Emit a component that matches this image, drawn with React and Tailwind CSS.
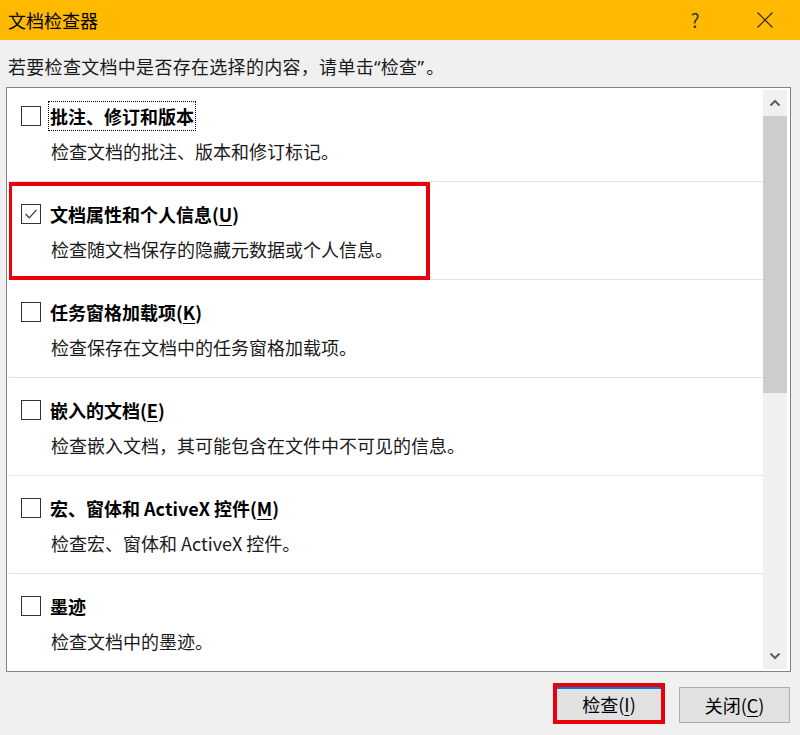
import React from 'react';

const items = [
    { title: '批注、修订和版本', desc: '检查文档的批注、版本和修订标记。', focused: true },
    { title: '文档属性和个人信息', key: 'U', desc: '检查随文档保存的隐藏元数据或个人信息。', checked: true, marked: true },
    { title: '任务窗格加载项', key: 'K', desc: '检查保存在文档中的任务窗格加载项。' },
    { title: '嵌入的文档', key: 'E', desc: '检查嵌入文档，其可能包含在文件中不可见的信息。' },
    { title: '宏、窗体和 ActiveX 控件', key: 'M', desc: '检查宏、窗体和 ActiveX 控件。' },
    { title: '墨迹', desc: '检查文档中的墨迹。' },
];

function Checkbox({ checked }) {
    return (
        <div className="w-[20px] h-[20px] shrink-0 border border-[#333] bg-white flex items-center justify-center">
            {checked && (
                <svg width="16" height="16" viewBox="0 0 16 16" fill="none">
                    <path d="M2.5 8 L6.3 11.8 L13.5 3.8" stroke="#333" strokeWidth="1.2" />
                </svg>
            )}
        </div>
    );
}

function Item({ item, first }) {
    return (
        <div className={`relative border-b border-[#e3e3e3] pb-[18px] ${first ? 'pt-[16px]' : 'pt-[20px]'}`}>
            <div className="flex items-center h-[24px] pl-[12px] gap-[7px]">
                <Checkbox checked={item.checked} />
                <span
                    className={`px-[1px] h-[30px] leading-[28px] font-bold text-[18px] text-black border border-dotted ${item.focused ? 'border-black' : 'border-transparent'}`}
                >
                    {item.title}
                    {item.key && (
                        <>
                            (<span className="underline underline-offset-[3px] decoration-1">{item.key}</span>)
                        </>
                    )}
                </span>
            </div>
            <div className="mt-[11px] pl-[42px] h-[24px] leading-[24px] text-[18px] text-[#1a1a1a]">
                {item.desc}
            </div>
            {item.marked && (
                <div className="absolute left-[-1px] top-0 w-[422px] h-[98px] border-4 border-[#e8000b]" />
            )}
        </div>
    );
}

function Chevron({ up }) {
    return (
        <svg width="12" height="8" viewBox="0 0 12 8" fill="none">
            <path d={up ? 'M1.5 6.5 L6 2 L10.5 6.5' : 'M1.5 1.5 L6 6 L10.5 1.5'} stroke="#606060" strokeWidth="2" />
        </svg>
    );
}

export default function App() {
    return (
        <div className="w-[800px] h-[735px] bg-[#f0f0f0] flex flex-col font-['Noto_Sans_CJK_SC',sans-serif] text-black">
            {/* title bar */}
            <div className="h-[40px] shrink-0 bg-[#ffb900] flex items-center pl-[8px] pr-[12px]">
                <span className="text-[18px] leading-[24px] flex-1">文档检查器</span>
                <div className="w-[46px] flex justify-center text-[19px] text-[#333] leading-[24px]">?</div>
                <div className="w-[46px] ml-[24px] flex justify-center">
                    <svg width="16" height="16" viewBox="0 0 16 16">
                        <path d="M0.5 0.5 L15.5 15.5 M15.5 0.5 L0.5 15.5" stroke="#222" strokeWidth="1.1" />
                    </svg>
                </div>
            </div>

            <div className="mt-[14px] pl-[8px] h-[24px] leading-[24px] text-[18px] text-[#1a1a1a] tracking-[0.3px]">
                若要检查文档中是否存在选择的内容，请单击<span className="font-['Noto_Sans',sans-serif]">“</span>检查<span className="font-['Noto_Sans',sans-serif] mr-[2px]">”</span>。
            </div>

            {/* list box */}
            <div className="mt-[9px] ml-[6px] w-[785px] h-[585px] border border-[#828282] bg-white flex overflow-hidden">
                <div className="flex-1 ml-[2px] overflow-hidden">
                    {items.map((item, i) => (
                        <Item key={i} item={item} first={i === 0} />
                    ))}
                </div>
                <div className="w-[24px] mt-[2px] mb-[2px] mr-[3px] bg-[#f0f0f0] flex flex-col">
                    <div className="h-[26px] flex items-center justify-center">
                        <Chevron up />
                    </div>
                    <div className="h-[277px] bg-[#cdcdcd]" />
                    <div className="flex-1" />
                    <div className="h-[26px] flex items-center justify-center">
                        <Chevron />
                    </div>
                </div>
            </div>

            {/* buttons */}
            <div className="flex justify-end items-start pr-[10px] gap-[14px]">
                <div className="mt-[11px] w-[112px] h-[41px] border-4 border-[#e8000b]">
                    <div className="h-full bg-[#e1e1e1] border-t-2 border-[#0078d7] flex items-center justify-center text-[18px] text-black">
                        检查(<span className="underline underline-offset-[3px] decoration-1">I</span>)
                    </div>
                </div>
                <div className="mt-[15px] w-[111px] h-[36px] bg-[#e1e1e1] border border-[#adadad] flex items-center justify-center text-[18px] text-black">
                    关闭(<span className="underline underline-offset-[3px] decoration-1">C</span>)
                </div>
            </div>
        </div>
    );
}
